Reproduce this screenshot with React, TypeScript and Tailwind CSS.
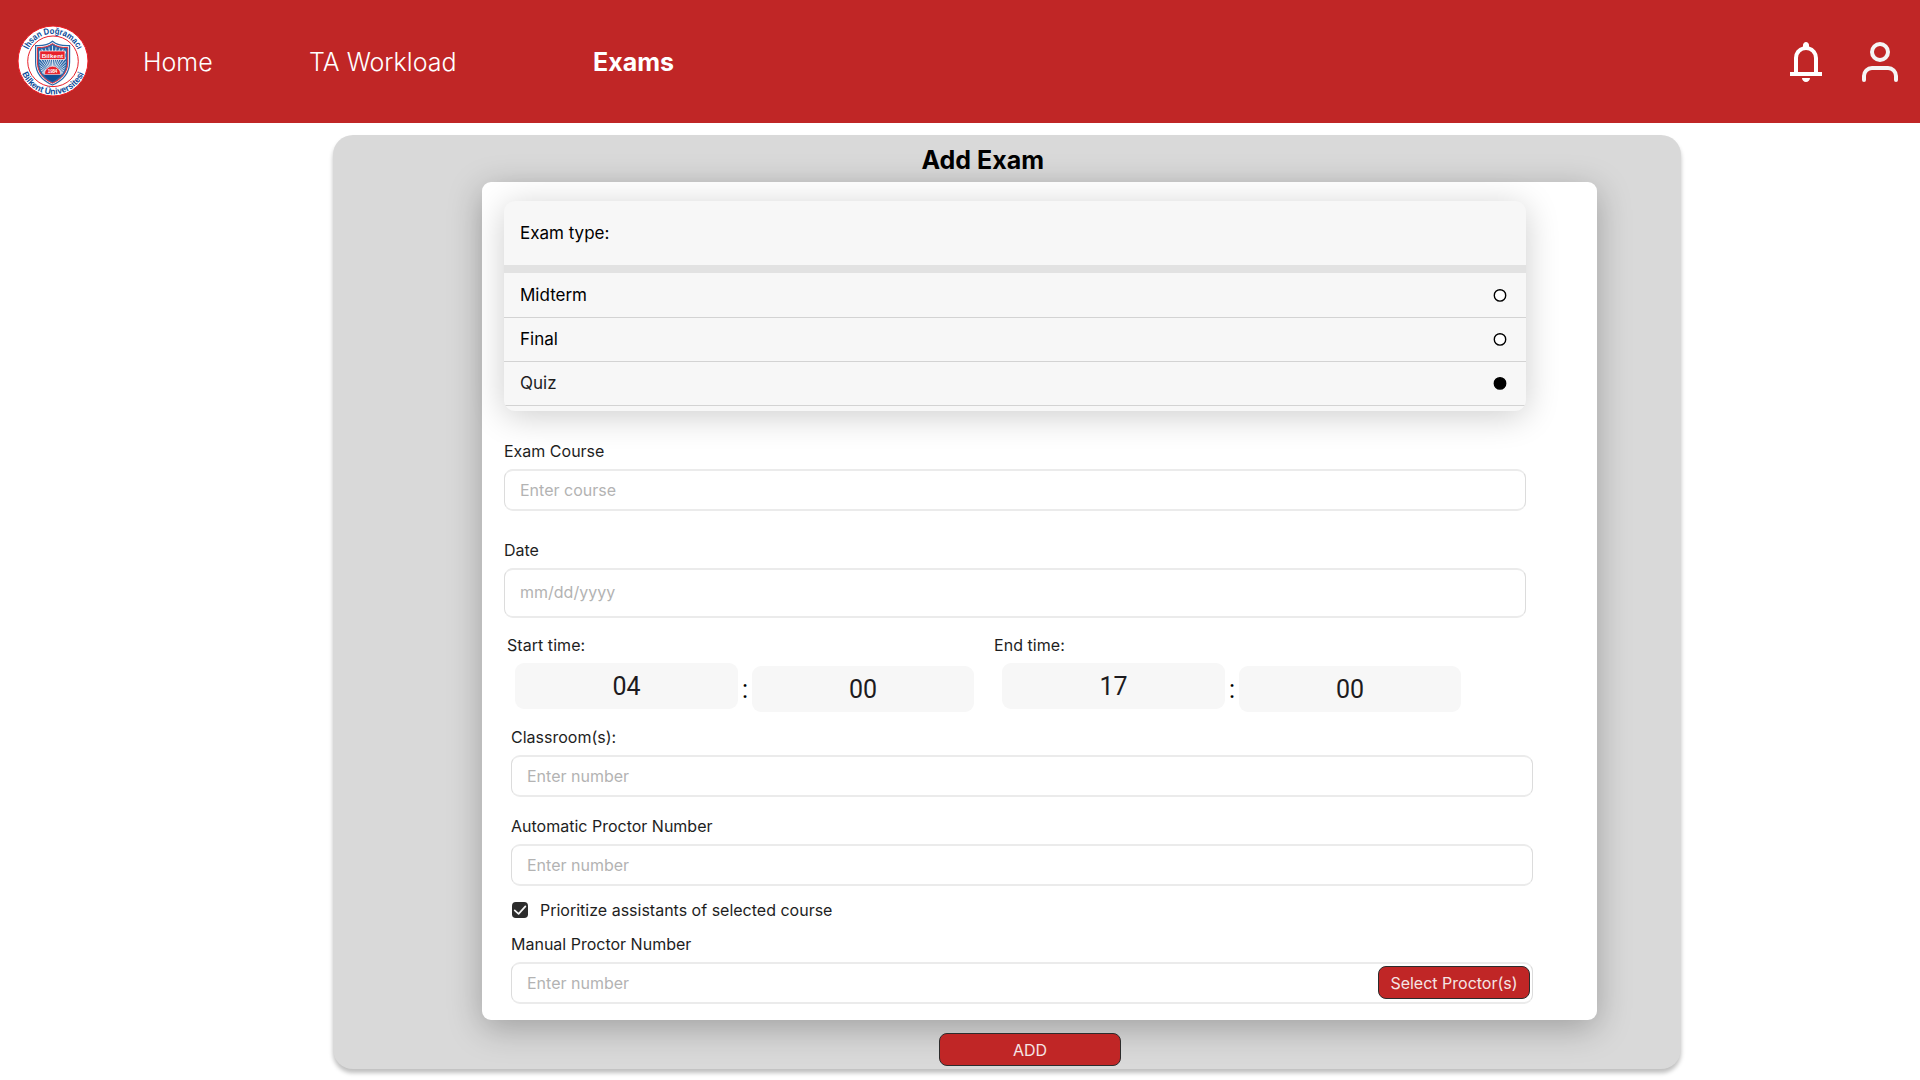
import type { ReactNode } from "react";

const rays = Array.from({ length: 25 }, (_, i) => {
  const a = Math.PI + (i * Math.PI) / 24;
  return [52.5 + Math.cos(a) * 40, 75 + Math.sin(a) * 40];
});

function Logo() {
  const shield =
    "M52.5 41.2C48 45 42 46 35.6 45.6V62C35.6 73 42 80.5 52.5 85C63 80.5 69.6 73 69.6 62V45.6C63 46 57 45 52.5 41.2Z";
  return (
    <svg className="-mt-px h-[74px] w-[74px] shrink-0" viewBox="16 24 74 74">
      <defs>
        <path id="arc-top" d="M25.8 61A27.2 27.2 0 0 1 80.2 61" />
        <path id="arc-bottom" d="M19.6 61A33.4 33.4 0 0 0 86.4 61" />
        <clipPath id="shield-clip">
          <path d="M52.5 45.5C49 48.2 44 49.2 39.2 49V62C39.2 71 44 77.5 52.5 81.5C61 77.5 66 71 66 62V49C61 49.2 56 48.2 52.5 45.5Z" />
        </clipPath>
      </defs>
      <circle cx="53" cy="61" r="35" fill="#fff" stroke="#ed1c24" strokeWidth="1" />
      <circle cx="53" cy="61.3" r="25.3" fill="#fff" stroke="#e8202a" strokeWidth="1" />
      <text fill="#0b4a99" fontSize="8.8" fontWeight="700" fontFamily="Liberation Sans, Arial, sans-serif">
        <textPath href="#arc-top" startOffset="50%" textAnchor="middle" textLength="62" lengthAdjust="spacingAndGlyphs">
          İhsan Doğramacı
        </textPath>
      </text>
      <text fill="#0b4a99" fontSize="8.8" fontWeight="700" fontFamily="Liberation Sans, Arial, sans-serif">
        <textPath href="#arc-bottom" startOffset="50%" textAnchor="middle" textLength="79" lengthAdjust="spacingAndGlyphs">
          Bilkent Üniversitesi
        </textPath>
      </text>
      <path d={shield} fill="#fff" stroke="#2a66a8" strokeWidth="1.2" />
      <path
        d="M52.5 43.6C48.5 46.8 43 47.8 37.4 47.5V62C37.4 72 43 79 52.5 83.2C62 79 67.8 72 67.8 62V47.5C62 47.8 56.5 46.8 52.5 43.6Z"
        fill="#2a66a8"
        stroke="#e8303a"
        strokeWidth="1"
      />
      <g clipPath="url(#shield-clip)">
        {rays.map(([x, y], i) => (
          <line key={i} x1="52.5" y1="75" x2={x} y2={y} stroke="#fff" strokeWidth="0.8" />
        ))}
        <rect x="38" y="74.4" width="30" height="12" fill="#0f4f96" />
      </g>
      <path d="M44.4 74.4A8.1 8.1 0 0 1 60.6 74.4Z" fill="#e8202a" stroke="#fff" strokeWidth="0.5" />
      <text x="52.6" y="73.2" textAnchor="middle" fill="#fff" fontSize="4.6" fontWeight="700" fontFamily="Liberation Sans, Arial, sans-serif" textLength="9.5">
        1984
      </text>
      <rect x="39.8" y="51" width="25.2" height="8.6" fill="#e8202a" stroke="#fff" strokeWidth="0.7" />
      <text x="52.4" y="57.6" textAnchor="middle" fill="#fff" fontSize="6.2" fontWeight="700" fontFamily="Liberation Sans, Arial, sans-serif" textLength="21.5">
        Bilkent
      </text>
    </svg>
  );
}

function BellIcon() {
  return (
    <svg className="h-12 w-12" viewBox="0 0 24 24" fill="#fff">
      <path d="M4 19v-2h2v-7q0-2.075 1.25-3.688T10.5 4.2v-.7q0-.625.438-1.062T12 2t1.063.438T13.5 3.5v.7q2 .5 3.25 2.113T18 10v7h2v2zm8 3q-.825 0-1.412-.587T10 20h4q0 .825-.587 1.413T12 22m-4-5h8v-7q0-1.65-1.175-2.825T12 6T9.175 7.175T8 10z" />
    </svg>
  );
}

function UserIcon() {
  return (
    <svg
      className="h-12 w-12"
      viewBox="0 0 24 24"
      fill="none"
      stroke="#f5f5f5"
      strokeWidth="2"
      strokeLinecap="round"
      strokeLinejoin="round"
    >
      <path d="M20 21v-2a4 4 0 0 0-4-4H8a4 4 0 0 0-4 4v2" />
      <circle cx="12" cy="7" r="4" />
    </svg>
  );
}

function Header() {
  return (
    <header className="flex h-[123px] items-center bg-[#c02626] pl-4 text-white">
      <Logo />
      <nav className="mt-0.5 ml-[53px] flex text-[25px] font-[350]">
        <a className="w-[166px]">Home</a>
        <a className="w-[284px]">TA Workload</a>
        <a className="font-bold">Exams</a>
      </nav>
      <div className="mt-px ml-auto flex gap-[26px] pr-4">
        <BellIcon />
        <UserIcon />
      </div>
    </header>
  );
}

function Option({ label, selected = false }: { label: string; selected?: boolean }) {
  return (
    <div className="flex h-11 items-center justify-between border-b border-[#d3d3d3] pr-[19px] pl-4 first:h-[45px] first:pt-px last:text-[#1e1e1e]">
      <span>{label}</span>
      <svg className="h-[14px] w-[14px]" viewBox="0 0 14 14">
        <circle cx="7" cy="6.4" r="5.7" fill={selected ? "#000" : "#fff"} stroke="#000" strokeWidth="1.4" />
      </svg>
    </div>
  );
}

function ExamTypeList() {
  return (
    <div className="h-[210px] w-[1022px] overflow-hidden rounded-[11px] bg-[#f7f7f7] text-[17px] text-black shadow-[0_5px_34px_rgba(0,0,0,0.2)]">
      <div className="flex h-16 items-center pt-0.5 pl-4">Exam type:</div>
      <div className="h-2 bg-[#e2e2e2]" />
      <div>
        <Option label="Midterm" />
        <Option label="Final" />
        <Option label="Quiz" selected />
      </div>
    </div>
  );
}

function Field({
  label,
  placeholder,
  className = "",
  tall = false,
  children,
}: {
  label: string;
  placeholder: string;
  className?: string;
  tall?: boolean;
  children?: ReactNode;
}) {
  return (
    <div className={className}>
      <div>{label}</div>
      <div
        className={`mt-1.5 flex w-[1022px] items-center justify-between rounded-[9px] border-x border-y-2 border-x-[#dcdcdc] border-y-[#ebebeb] bg-white pr-0.5 pl-[15px] text-[#b3b3b3] ${
          tall ? "h-[50px] pb-0.5" : "h-[42px]"
        }`}
      >
        <span>{placeholder}</span>
        {children}
      </div>
    </div>
  );
}

function TimeGroup({ label, hour, minute }: { label: string; hour: string; minute: string }) {
  return (
    <div className="w-[487px]">
      <div className="tracking-[0.05px]">{label}</div>
      <div className="mt-1.5 flex h-[49px] pl-2 font-[Roboto] text-[25px] text-[#1d1b20]">
        <div className="flex h-[46px] w-[223px] items-center justify-center rounded-[9px] bg-[#f7f7f7] pt-0.5">
          {hour}
        </div>
        <div className="flex w-[14px] items-center justify-center pt-[5px] text-black">:</div>
        <div className="mt-[3px] flex h-[46px] w-[222px] items-center justify-center rounded-[9px] bg-[#f7f7f7] pt-0.5">
          {minute}
        </div>
      </div>
    </div>
  );
}

function Checkbox({ label }: { label: string }) {
  return (
    <div className="mt-3 ml-2 flex items-center gap-3">
      <svg className="h-4 w-4" viewBox="0 0 16 16">
        <rect width="16" height="16" rx="3.8" fill="#2c2c2c" />
        <path
          d="M2.7 8.3L6.6 11.8L13.4 4.4"
          fill="none"
          stroke="#f5f5f5"
          strokeWidth="1.7"
          strokeLinecap="round"
          strokeLinejoin="round"
        />
      </svg>
      <span>{label}</span>
    </div>
  );
}

function Button({ children, className }: { children: ReactNode; className: string }) {
  return (
    <button
      className={`flex h-[33px] shrink-0 items-center justify-center rounded-[8px] border border-[#2c2c2c] bg-[#c02626] text-base text-[#f5e4e4] ${className}`}
    >
      {children}
    </button>
  );
}

export default function App() {
  return (
    <div className="h-[1080px] w-[1920px] overflow-hidden bg-white font-[Inter,sans-serif]">
      <Header />
      <main className="mt-3 ml-[333px] h-[934px] w-[1348px] rounded-[20px] bg-[#d9d9d9] shadow-[0_4px_4px_rgba(0,0,0,0.25)]">
        <h1 className="h-[47px] pt-[3px] pl-[588.5px] text-[25px] leading-[44px] font-bold text-black">Add Exam</h1>
        <section className="ml-[149px] h-[838px] w-[1115px] rounded-[9px] bg-white pt-[19px] pl-[22px] text-base text-[#1e1e1e] shadow-[0_8px_34px_rgba(0,0,0,0.27)]">
          <ExamTypeList />
          <Field className="mt-7" label="Exam Course" placeholder="Enter course" />
          <Field className="mt-[27px]" label="Date" placeholder="mm/dd/yyyy" tall />
          <div className="mt-[15px] ml-[3px] flex">
            <TimeGroup label="Start time:" hour="04" minute="00" />
            <TimeGroup label="End time:" hour="17" minute="00" />
          </div>
          <Field className="mt-[13px] ml-[7px]" label="Classroom(s):" placeholder="Enter number" />
          <Field className="mt-[17px] ml-[7px]" label="Automatic Proctor Number" placeholder="Enter number" />
          <Checkbox label="Prioritize assistants of selected course" />
          <Field className="mt-2.5 ml-[7px]" label="Manual Proctor Number" placeholder="Enter number">
            <Button className="-mt-px w-[152px]">Select Proctor(s)</Button>
          </Field>
        </section>
        <Button className="mt-[13px] ml-[606px] w-[182px]">ADD</Button>
      </main>
    </div>
  );
}
